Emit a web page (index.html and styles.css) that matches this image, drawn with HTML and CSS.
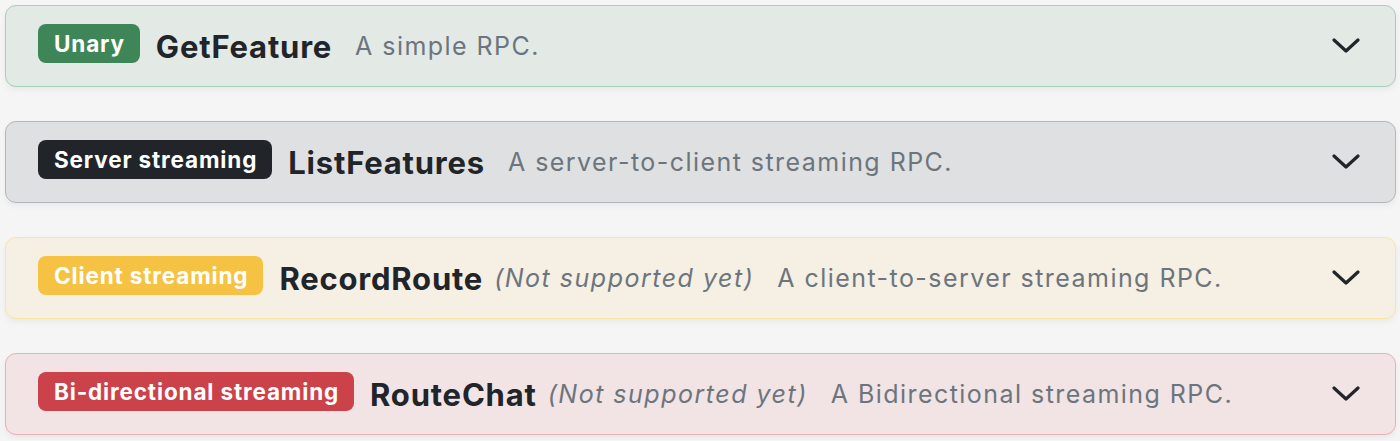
FILE: index.html
```html
<!DOCTYPE html>
<html lang="en">
<head>
<meta charset="utf-8">
<title>RPC methods</title>
<link rel="stylesheet" href="styles.css">
</head>
<body>
<div class="list">
  <div class="card card-unary">
    <span class="badge badge-unary">Unary</span>
    <span class="name">GetFeature</span>
    <span class="desc">A simple RPC.</span>
    <svg class="chev" viewBox="0 0 28 16" width="28" height="16"><path d="M2 2 L14 13 L26 2" fill="none" stroke="currentColor" stroke-width="3.2" stroke-linecap="round" stroke-linejoin="round"/></svg>
  </div>
  <div class="card card-server">
    <span class="badge badge-server">Server streaming</span>
    <span class="name">ListFeatures</span>
    <span class="desc">A server-to-client streaming RPC.</span>
    <svg class="chev" viewBox="0 0 28 16" width="28" height="16"><path d="M2 2 L14 13 L26 2" fill="none" stroke="currentColor" stroke-width="3.2" stroke-linecap="round" stroke-linejoin="round"/></svg>
  </div>
  <div class="card card-client">
    <span class="badge badge-client">Client streaming</span>
    <span class="name">RecordRoute</span>
    <span class="note">(Not supported yet)</span>
    <span class="desc">A client-to-server streaming RPC.</span>
    <svg class="chev" viewBox="0 0 28 16" width="28" height="16"><path d="M2 2 L14 13 L26 2" fill="none" stroke="currentColor" stroke-width="3.2" stroke-linecap="round" stroke-linejoin="round"/></svg>
  </div>
  <div class="card card-bidi">
    <span class="badge badge-bidi">Bi-directional streaming</span>
    <span class="name">RouteChat</span>
    <span class="note">(Not supported yet)</span>
    <span class="desc">A Bidirectional streaming RPC.</span>
    <svg class="chev" viewBox="0 0 28 16" width="28" height="16"><path d="M2 2 L14 13 L26 2" fill="none" stroke="currentColor" stroke-width="3.2" stroke-linecap="round" stroke-linejoin="round"/></svg>
  </div>
</div>
</body>
</html>
```
FILE: styles.css
```css
html, body {
  margin: 0;
  padding: 0;
  background: #f5f5f5;
  font-family: Inter, "Noto Sans", sans-serif;
  color: #212529;
}

.list {
  display: flex;
  flex-direction: column;
  gap: 34px;
  padding: 5px 4px 5px 5px;
}

.card {
  display: flex;
  align-items: center;
  height: 82px;
  box-sizing: border-box;
  padding: 0 35px 0 32px;
  border: 1.5px solid;
  border-radius: 11px;
  box-shadow: 0 3px 6px rgba(0, 0, 0, 0.05);
}

.card-unary { background: #e3e9e5; border-color: #a7cfb8; }
.card-server { background: #dfe0e1; border-color: #b2b7be; }
.card-client { background: #f6efe3; border-color: #fbe5a3; }
.card-bidi { background: #f2e3e4; border-color: #ebafb4; }

.badge {
  display: inline-flex;
  align-items: center;
  height: 39px;
  padding: 0 15px 0 16px;
  border-radius: 8px;
  font-size: 22.5px;
  font-weight: 700;
  letter-spacing: 0.85px;
  color: #fff;
  margin-bottom: 5px;
  white-space: nowrap;
}

.badge-unary { background: #3e8657; }
.badge-server { background: #212529; }
.badge-client { background: #f6c244; }
.badge-bidi { background: #cc424a; }

.name {
  margin-left: 16px;
  font-size: 31px;
  font-weight: 700;
  letter-spacing: 0.8px;
  color: #212529;
  white-space: nowrap;
}

.note {
  margin-left: 11px;
  font-size: 25px;
  font-style: italic;
  letter-spacing: 1.5px;
  color: #6c757d;
  white-space: nowrap;
}

.desc {
  margin-left: 23px;
  font-size: 25px;
  letter-spacing: 1.45px;
  color: #6c757d;
  white-space: nowrap;
}

.chev {
  margin-left: auto;
  color: #212529;
}
```
